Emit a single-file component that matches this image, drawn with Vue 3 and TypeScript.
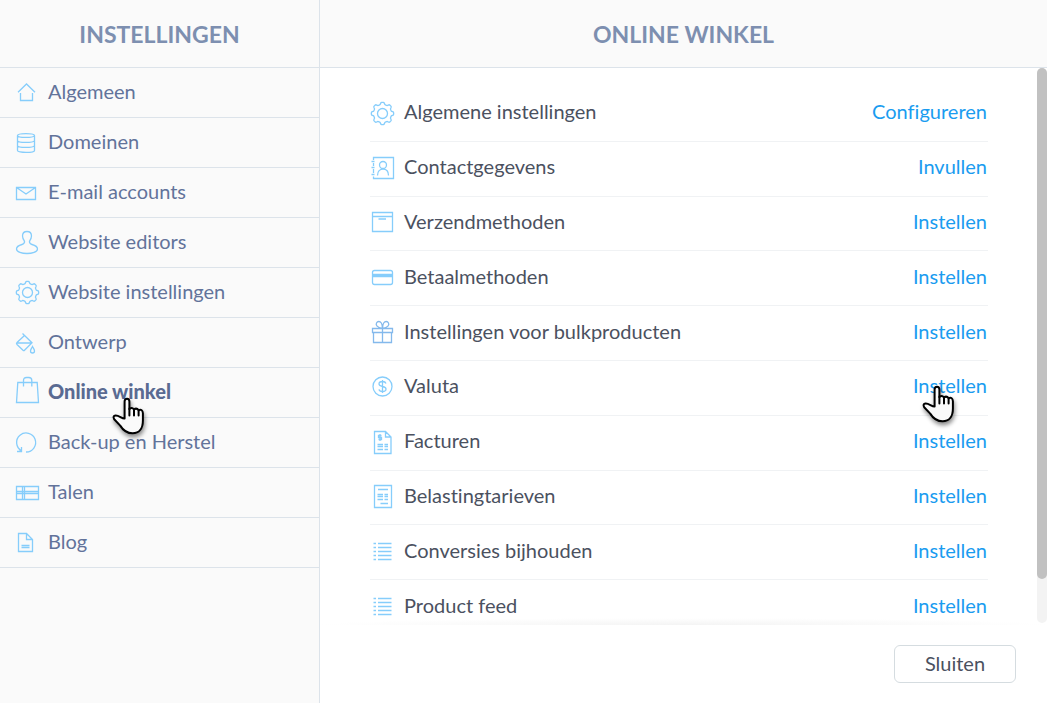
<script setup lang="ts">
interface MenuItem {
  label: string
  icon: string
  active?: boolean
}

interface SettingRow {
  label: string
  action: string
  icon: string
  hovered?: boolean
}

const menu: MenuItem[] = [
  { label: 'Algemeen', icon: 'home' },
  { label: 'Domeinen', icon: 'database' },
  { label: 'E-mail accounts', icon: 'mail' },
  { label: 'Website editors', icon: 'user' },
  { label: 'Website instellingen', icon: 'gear' },
  { label: 'Ontwerp', icon: 'bucket' },
  { label: 'Online winkel', icon: 'bag', active: true },
  { label: 'Back-up en Herstel', icon: 'restore' },
  { label: 'Talen', icon: 'flag' },
  { label: 'Blog', icon: 'page' },
]

const rows: SettingRow[] = [
  { label: 'Algemene instellingen', action: 'Configureren', icon: 'gear' },
  { label: 'Contactgegevens', action: 'Invullen', icon: 'contact' },
  { label: 'Verzendmethoden', action: 'Instellen', icon: 'box' },
  { label: 'Betaalmethoden', action: 'Instellen', icon: 'card' },
  { label: 'Instellingen voor bulkproducten', action: 'Instellen', icon: 'gift' },
  { label: 'Valuta', action: 'Instellen', icon: 'dollar', hovered: true },
  { label: 'Facturen', action: 'Instellen', icon: 'invoice' },
  { label: 'Belastingtarieven', action: 'Instellen', icon: 'tax' },
  { label: 'Conversies bijhouden', action: 'Instellen', icon: 'list' },
  { label: 'Product feed', action: 'Instellen', icon: 'list' },
]

// Eight rounded teeth around a centre point.
function gearPath(cx: number, cy: number): string {
  const points: string[] = []
  const steps = 96
  for (let i = 0; i < steps; i++) {
    const a = (i / steps) * Math.PI * 2
    const wave = Math.cos(8 * a)
    const r = 10.1 + 1.1 * Math.tanh(2.2 * wave)
    points.push(`${(cx + r * Math.cos(a)).toFixed(2)} ${(cy + r * Math.sin(a)).toFixed(2)}`)
  }
  return `M${points.join('L')}Z`
}

const ring = (cx: number, cy: number, r: number): string =>
  `M${cx - r} ${cy}a${r} ${r} 0 1 0 ${2 * r} 0a${r} ${r} 0 1 0 ${-2 * r} 0Z`

const menuIcons: Record<string, string> = {
  home: 'M6 16.2L14.5 8L23 16.2M8.5 17V24.5H20.5V17',
  database:
    'M5.5 9.5C5.5 6.9 22.5 6.9 22.5 9.5V24.5C22.5 27.1 5.5 27.1 5.5 24.5ZM5.5 9.5C5.5 12.1 22.5 12.1 22.5 9.5M5.5 14.5C5.5 17.1 22.5 17.1 22.5 14.5M5.5 19.5C5.5 22.1 22.5 22.1 22.5 19.5',
  mail: 'M4.5 11.5H23.5V23.5H4.5ZM4.5 11.5L14 18L23.5 11.5',
  user:
    'M15 5.5C12 5.5 10.5 7.5 10.5 10C10.5 12.5 12 14.5 12.5 15.2C12.8 17.6 12 18 10 18.5C7 19.3 4.5 20.5 4.5 23C4.5 26 10 27.5 15 27.5S25.5 26 25.5 23C25.5 20.5 23 19.3 20 18.5C18 18 17.2 17.6 17.5 15.2C18 14.5 19.5 12.5 19.5 10C19.5 7.5 18 5.5 15 5.5Z',
  gear: gearPath(15.5, 16.5) + ring(15.5, 16.5, 5),
  bucket:
    'M10.5 7.5L20 16.8L12.5 24.2Q11.8 25 11 24.2L5 18.5Q4 17.5 5 16.5L12.5 9.5M4.8 17H20M20.5 20.5C19.5 22.5 18.5 23.5 18.5 25A2 2 0 0 0 22.5 25C22.5 23.5 21.5 22.5 20.5 20.5Z',
  bag: 'M5.8 6.5H25.2L26.5 26.5H4.5ZM11.5 10.5V4.5Q11.5 1.5 14.5 1.5H16.8Q19.8 1.5 19.8 4.5V10.5',
  restore: 'M9.5 24.8A9.5 9.5 0 1 1 14 26M5 25.5H9.5V21M9.5 25.5L7.5 23.5',
  flag: 'M4.5 10.5H26.5V23.5H4.5ZM10.5 10.5V23.5M12.5 10.5V23.5M4.5 15.5H26.5M4.5 17.5H26.5',
  page: 'M6.5 7.5H14.5L20.5 13.5V25.5H6.5ZM14.5 7.5V13.5H20.5M9.5 19.5H17.5M9.5 21.5H17.5',
}

const rowIcons: Record<string, string> = {
  gear: gearPath(12.5, 13.5) + ring(12.5, 13.5, 5),
  contact:
    'M3.5 5V2.5H23.5V23.5H3.5V21.5M3.5 8V11M3.5 14V18M1.5 6.5H4.5M1.5 12.5H4.5M1.5 19.5H4.5' +
    ring(13, 10, 3.5) +
    'M7.5 20.5C7.5 16 10 14.2 13 14.2S18.5 16 18.5 20.5',
  box: 'M2.5 3.5H22.5V22.5H2.5ZM2.5 7.5H22.5M8.5 10H16',
  card: 'M4.5 6.5H20.5Q22.5 6.5 22.5 8.5V18.5Q22.5 20.5 20.5 20.5H4.5Q2.5 20.5 2.5 18.5V8.5Q2.5 6.5 4.5 6.5ZM2.5 10.5H22.5M2.5 11.5H22.5M2.5 12.5H22.5',
  gift:
    'M2.5 9.5H22.5V13.5H2.5ZM3.5 13.5V23.5H21.5V13.5M12.5 9.5V23.5M12.5 9.5C7 8.5 5.5 6 6.5 4C7.5 2 10 2 11.3 4C12.3 5.5 12.5 7.5 12.5 9.5C12.5 7.5 12.7 5.5 13.7 4C15 2 17.5 2 18.5 4C19.5 6 18 8.5 12.5 9.5Z',
  dollar:
    ring(12.5, 12.5, 9.5) +
    'M12.5 6V19M16 9.5C15.5 8 14 7.5 12.5 7.5C10.5 7.5 9 8.5 9 10C9 13.5 16 11.5 16 15C16 16.5 14.5 17.5 12.5 17.5C10.5 17.5 9.3 16.8 9 15.3',
  invoice:
    'M4.5 2.5H15.5L21 8V24.5H4.5ZM15.5 2.5V8H21M7.5 15.5H13M7.5 17.5H13M7.5 20.5H13M14.5 15.5H18M14.5 17.5H18M14.5 20.5H18M10 5V12M11.5 6.5H8.5V8.5H11.5V10.5H8.5',
  tax: 'M4.5 2.5H21.5V24.5H4.5ZM8 6.5H18M7.5 11.5H13M7.5 13.5H13M7.5 16.5H13M14.5 11.5H18M14.5 13.5H18M14.5 16.5H18M10.5 20.5H18',
  list:
    'M3.5 5.5H6M8 5.5H21.5M3.5 9.5H6M8 9.5H21.5M3.5 13.5H6M8 13.5H21.5M3.5 17.5H6M8 17.5H21.5M3.5 21.5H6M8 21.5H21.5',
}
const handPath =
  'M12.6 21.5V4.6Q12.6 1.7 15 1.7T17.4 4.6V12.2Q19.6 9.7 22 12.4Q24.6 10.5 26.6 13.2Q30.6 11.8 30.9 16.2V23.5C30.9 31.5 27 36.3 20.6 36.3C14.5 36.3 11.3 33.6 8.2 28.6L2.2 22.2Q0.4 19 3.6 18.6C7 18.4 9.6 21.6 12.6 21.5Z'
const knuckles = 'M17.4 11.5V18.5M22 12.4V18.5M26.6 13.2V18.5'
</script>

<template>
  <div class="settings">
    <aside class="sidebar">
      <h2 class="title">INSTELLINGEN</h2>
      <nav>
        <a
          v-for="item in menu"
          :key="item.label"
          href="#"
          class="menu-item"
          :class="{ active: item.active }"
          @click.prevent
        >
          <svg class="menu-icon" viewBox="0 0 33 33" aria-hidden="true"><path :d="menuIcons[item.icon]" /></svg>
          <span class="menu-label">{{ item.label }}</span>
          <svg v-if="item.active" class="hand hand-menu" viewBox="0 0 36 42" aria-hidden="true">
            <path :d="handPath" class="hand-fill" />
            <path :d="knuckles" class="hand-lines" />
          </svg>
        </a>
      </nav>
    </aside>

    <main class="panel">
      <h1 class="title">ONLINE WINKEL</h1>
      <div class="scroller">
        <ul class="rows">
          <li v-for="row in rows" :key="row.label" class="row">
            <svg class="row-icon" :class="row.icon" viewBox="0 0 34 28" aria-hidden="true">
              <path :d="rowIcons[row.icon]" />
            </svg>
            <span class="row-label">{{ row.label }}</span>
            <a href="#" class="action" @click.prevent>
              {{ row.action }}
              <svg v-if="row.hovered" class="hand hand-row" viewBox="0 0 36 42" aria-hidden="true">
                <path :d="handPath" class="hand-fill" />
                <path :d="knuckles" class="hand-lines" />
              </svg>
            </a>
          </li>
        </ul>
        <div class="fade"></div>
        <div class="track"><div class="thumb"></div></div>
      </div>
      <footer class="footer">
        <button type="button" class="close">Sluiten</button>
      </footer>
    </main>
  </div>
</template>

<style>
body {
  margin: 0;
}
</style>

<style scoped>
.settings {
  display: grid;
  grid-template-columns: 320px 1fr;
  height: 100vh;
  background: #fff;
  color: #4b515f;
  font-family: Lato, 'Liberation Sans', sans-serif;
  font-size: 20px;
  font-variant-ligatures: none;
  line-height: 24px;
}

.sidebar {
  box-sizing: border-box;
  background: #fafafa;
  border-right: 1px solid #dce3ea;
}

.title {
  box-sizing: border-box;
  height: 68px;
  margin: 0;
  border-bottom: 1px solid #dce3ea;
  background: #fafafa;
  color: #7d8fb0;
  font-size: 23px;
  font-weight: 700;
  line-height: 68px;
  text-align: center;
}

.menu-item {
  position: relative;
  display: flex;
  align-items: center;
  box-sizing: border-box;
  height: 50px;
  padding-left: 12px;
  border-bottom: 1px solid #dce3ea;
  color: #62739a;
  text-decoration: none;
}

.menu-item.active {
  z-index: 1;
  color: #5a6b92;
  font-weight: 900;
}

.menu-label {
  padding-bottom: 3px;
}

.menu-icon {
  width: 33px;
  height: 33px;
  margin-right: 3px;
}

.menu-icon,
.row-icon {
  flex: none;
  fill: none;
  stroke: #86cdfb;
  stroke-width: 1.3;
}

.panel {
  display: flex;
  flex-direction: column;
  min-width: 0;
  min-height: 0;
}

.scroller {
  position: relative;
  flex: 1;
  min-height: 0;
  overflow: hidden;
}

.rows {
  display: grid;
  grid-auto-rows: 1fr;
  min-height: 548px;
  margin: 0 59px 0 50px;
  padding: 19px 0 0;
  list-style: none;
}

.row {
  display: flex;
  align-items: center;
  border-bottom: 1px solid #f0f2f4;
}

.row-icon {
  width: 34px;
  height: 28px;
}

.row-icon.gift {
  stroke: #84b9ec;
}

.row-label {
  flex: 1;
  padding-bottom: 5px;
}

.action {
  position: relative;
  padding: 0 1px 5px 0;
  color: #1a9cf0;
  text-decoration: none;
}

.hand {
  position: absolute;
  width: 36px;
  height: 42px;
  filter: drop-shadow(1px 3px 2px rgba(0, 0, 0, 0.45));
}

.hand-menu {
  top: 29px;
  left: 112px;
}

.hand-row {
  top: 12px;
  right: 30px;
}

.hand-fill {
  fill: #fafafa;
  stroke: #000;
  stroke-width: 2;
  stroke-linejoin: round;
}

.hand-lines {
  fill: none;
  stroke: #000;
  stroke-width: 2;
  stroke-linecap: round;
}

.fade {
  position: absolute;
  right: 0;
  bottom: 0;
  left: 0;
  height: 7px;
  background: radial-gradient(ellipse 50% 100% at 50% 100%, #f4f4f4, rgba(248, 248, 248, 0));
}

.track {
  position: absolute;
  top: 0;
  right: 0;
  bottom: 2px;
  width: 10px;
  border-radius: 5px;
  background: #f3f3f3;
}

.thumb {
  height: 92%;
  border-radius: 5px;
  background: #c1c1c1;
}

.footer {
  display: flex;
  justify-content: flex-end;
  padding: 20px 31px 20px 0;
}

.close {
  box-sizing: border-box;
  width: 122px;
  height: 38px;
  padding: 0 0 2px;
  border: 1px solid #d5dce0;
  border-radius: 6px;
  background: #fff;
  color: #4b515f;
  font: inherit;
}
</style>
